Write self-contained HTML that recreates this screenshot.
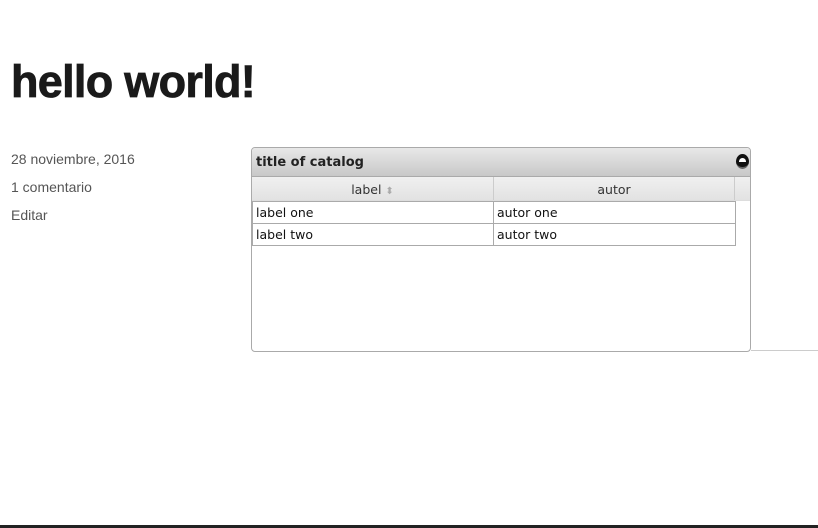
<!DOCTYPE html><html><head><style>
body{margin:0;width:818px;height:528px;background:#fff;position:relative;overflow:hidden;font-family:"DejaVu Sans","Liberation Sans",sans-serif}
h1{position:absolute;left:11px;top:56px;margin:0;font:900 45px "Liberation Sans",sans-serif;color:#1a1a1a;letter-spacing:-0.7px;-webkit-text-stroke:0.8px #1a1a1a}
.m{position:absolute;left:11px;font:14px "Liberation Sans",sans-serif;color:#555}
.box{position:absolute;left:251px;top:147px;width:498px;height:203px;border:1px solid #aaa;border-radius:4px;background:#fff;overflow:hidden}
.tb{height:28px;background:linear-gradient(#e8e8e8,#c8c8c8);border-bottom:1px solid #aaa;font-weight:bold;font-size:13px;line-height:29px;padding-left:4px;color:#222;position:relative}
.btn{position:absolute;right:1px;top:6px;width:13px;height:13px;border-radius:50%;background:#111;border-bottom:2px solid #666}
.btn:after{content:"";position:absolute;left:3px;top:4px;width:7px;height:4px;background:#fff;border-radius:4px 4px 0 0}
.hd{height:23px;background:linear-gradient(#f0f0f0,#e2e2e2);border-bottom:1px solid #ddd;display:flex;font-size:12.5px;color:#333;line-height:25px}
.hd div{text-align:center;border-right:1px solid #ccc}
.r{display:flex;width:482px;height:21px;border:1px solid #aaa;border-top:none;font-size:12.5px;line-height:22px;color:#111}
.r div{padding-left:3px;box-sizing:border-box}
</style></head><body>
<h1>hello world!</h1>
<div class="m" style="top:151px">28 noviembre, 2016</div>
<div class="m" style="top:179px">1 comentario</div>
<div class="m" style="top:207px">Editar</div>
<div class="box">
<div class="tb">title of catalog<div class="btn"></div></div>
<div class="hd"><div style="width:241px">label <span style="color:#aaa;font-size:10px">⬍</span></div><div style="width:240px">autor</div></div>
<div class="r" style="border-top:1px solid #aaa"><div style="width:241px;border-right:1px solid #aaa">label one</div><div>autor one</div></div>
<div class="r"><div style="width:241px;border-right:1px solid #aaa">label two</div><div>autor two</div></div>
</div>
<div style="position:absolute;left:751px;top:350px;width:67px;height:1px;background:#ccc"></div>
<div style="position:absolute;left:0;top:525px;width:818px;height:3px;background:#222"></div>
</body></html>
